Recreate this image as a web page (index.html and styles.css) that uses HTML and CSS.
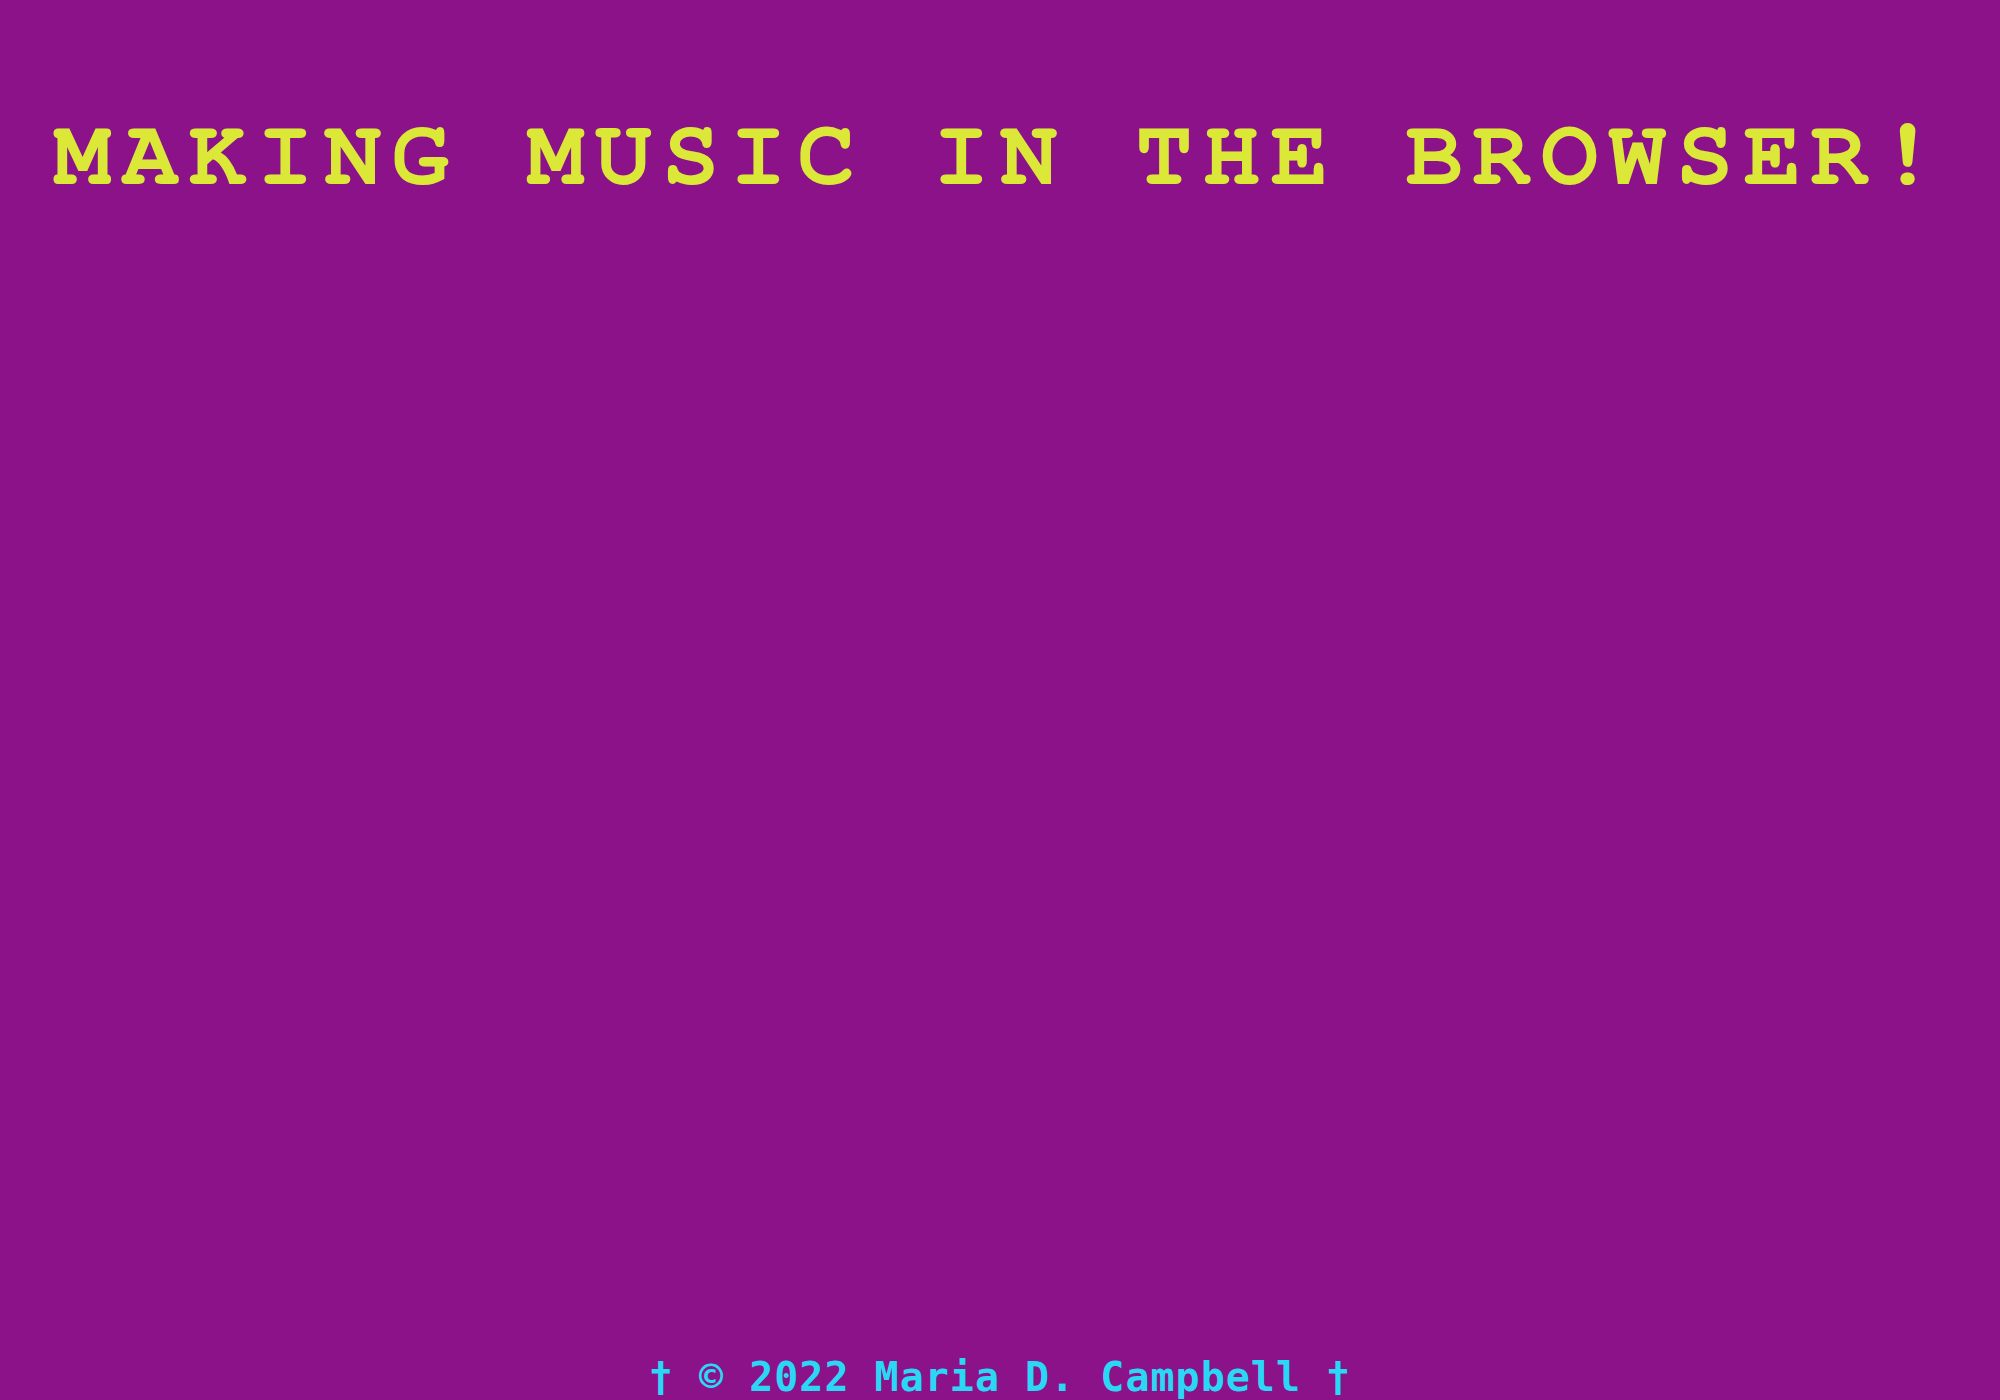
FILE: index.html
```html
<!DOCTYPE html>
<html lang="en">
<head>
<meta charset="utf-8">
<title>Making Music in the Browser!</title>
<link rel="stylesheet" href="styles.css">
</head>
<body>
<div class="page">
  <header class="masthead">
    <h1 class="title">MAKING MUSIC IN THE BROWSER!</h1>
  </header>
  <main class="content"></main>
  <footer class="footer">† © 2022 Maria D. Campbell †</footer>
</div>
</body>
</html>
```
FILE: styles.css
```css
html, body {
  margin: 0;
  padding: 0;
  background: #8b1289;
}

.page {
  min-height: 100vh;
  display: flex;
  flex-direction: column;
  background: #8b1289;
}

.masthead {
  padding-top: 107px;
}

.title {
  margin: 0;
  font-family: "Nimbus Mono PS", "Nimbus Mono L", "FreeMono", "Courier 10 Pitch", "Liberation Mono", monospace;
  font-weight: bold;
  font-size: 96px;
  line-height: normal;
  letter-spacing: 10px;
  color: #dbe838;
  text-align: center;
  white-space: nowrap;
}

.content {
  flex: 1;
}

.footer {
  font-family: "DejaVu Sans Mono", "Liberation Mono", monospace;
  font-weight: bold;
  font-size: 40px;
  letter-spacing: 1px;
  line-height: normal;
  color: #2ad8f6;
  text-align: center;
  white-space: nowrap;
}
```
